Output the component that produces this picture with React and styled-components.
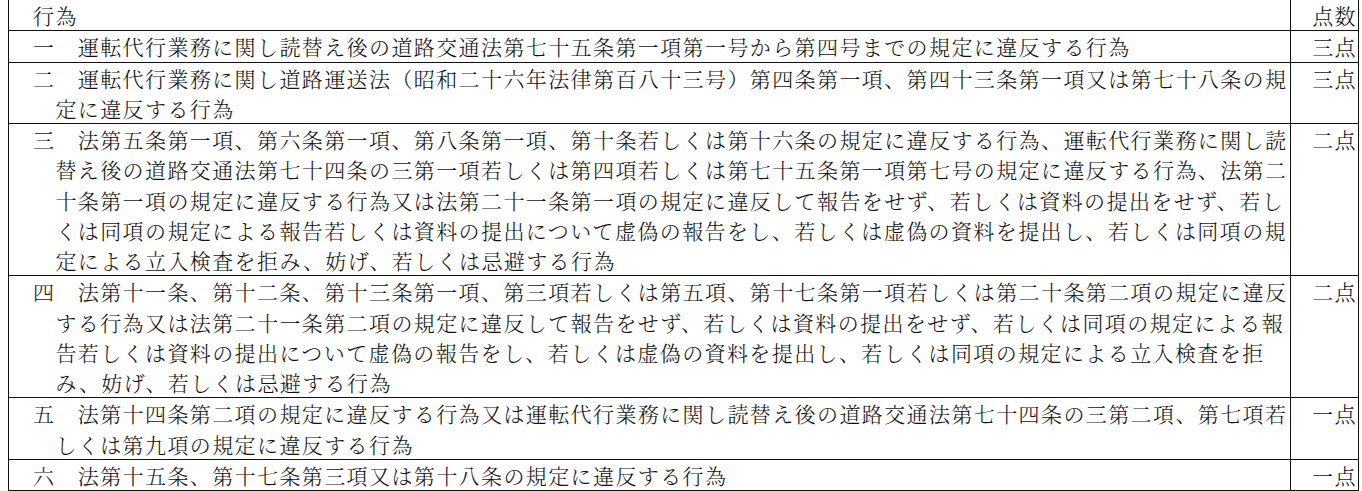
import React from "react";
import styled, { createGlobalStyle } from "styled-components";

const GlobalStyle = createGlobalStyle`
   html, body {
      margin: 0;
      padding: 0;
      background: #fff;
   }
`;

const Page = styled.div`
   padding-left: 8px;
   font-family: "Noto Serif CJK JP", "Noto Sans CJK JP", serif;
   font-size: 21px;
   font-weight: 300;
   letter-spacing: 1.4px;
   line-height: 30.25px;
   color: #111;
`;

const Table = styled.table`
   width: 1350px;
   margin-top: -1px;
   border-collapse: collapse;
   table-layout: fixed;
`;

const Col = styled.col`
   width: ${(props) => props.width};
`;

const Th = styled.th`
   font-weight: inherit;
   border: 1px solid #111;
   padding: ${(props) => (props.points ? "0 1px 0 0" : "0 0 0 24px")};
   text-align: ${(props) => (props.points ? "right" : "left")};
`;

const Td = styled.td`
   border: 1px solid #111;
   vertical-align: top;
   padding: 0;
`;

const ActCell = styled(Td)`
   padding-left: 46.4px;
   text-indent: -22.4px;
`;

const PointCell = styled(Td)`
   text-align: right;
   padding-right: 1px;
`;

const rows = [
   {
      num: "一",
      text: "運転代行業務に関し読替え後の道路交通法第七十五条第一項第一号から第四号までの規定に違反する行為",
      points: "三点",
   },
   {
      num: "二",
      text: "運転代行業務に関し道路運送法（昭和二十六年法律第百八十三号）第四条第一項、第四十三条第一項又は第七十八条の規定に違反する行為",
      points: "三点",
   },
   {
      num: "三",
      text: "法第五条第一項、第六条第一項、第八条第一項、第十条若しくは第十六条の規定に違反する行為、運転代行業務に関し読替え後の道路交通法第七十四条の三第一項若しくは第四項若しくは第七十五条第一項第七号の規定に違反する行為、法第二十条第一項の規定に違反する行為又は法第二十一条第一項の規定に違反して報告をせず、若しくは資料の提出をせず、若しくは同項の規定による報告若しくは資料の提出について虚偽の報告をし、若しくは虚偽の資料を提出し、若しくは同項の規定による立入検査を拒み、妨げ、若しくは忌避する行為",
      points: "二点",
   },
   {
      num: "四",
      text: "法第十一条、第十二条、第十三条第一項、第三項若しくは第五項、第十七条第一項若しくは第二十条第二項の規定に違反する行為又は法第二十一条第二項の規定に違反して報告をせず、若しくは資料の提出をせず、若しくは同項の規定による報告若しくは資料の提出について虚偽の報告をし、若しくは虚偽の資料を提出し、若しくは同項の規定による立入検査を拒み、妨げ、若しくは忌避する行為",
      points: "二点",
   },
   {
      num: "五",
      text: "法第十四条第二項の規定に違反する行為又は運転代行業務に関し読替え後の道路交通法第七十四条の三第二項、第七項若しくは第九項の規定に違反する行為",
      points: "一点",
   },
   {
      num: "六",
      text: "法第十五条、第十七条第三項又は第十八条の規定に違反する行為",
      points: "一点",
   },
];

const App = () => {
   return (
      <Page>
         <GlobalStyle />
         <Table>
            <colgroup>
               <Col width="1282px" />
               <Col width="68px" />
            </colgroup>
            <thead>
               <tr>
                  <Th>行為</Th>
                  <Th points>点数</Th>
               </tr>
            </thead>
            <tbody>
               {rows.map((row) => (
                  <tr key={row.num}>
                     <ActCell>
                        {row.num}　{row.text}
                     </ActCell>
                     <PointCell>{row.points}</PointCell>
                  </tr>
               ))}
            </tbody>
         </Table>
      </Page>
   );
};

export default App;
